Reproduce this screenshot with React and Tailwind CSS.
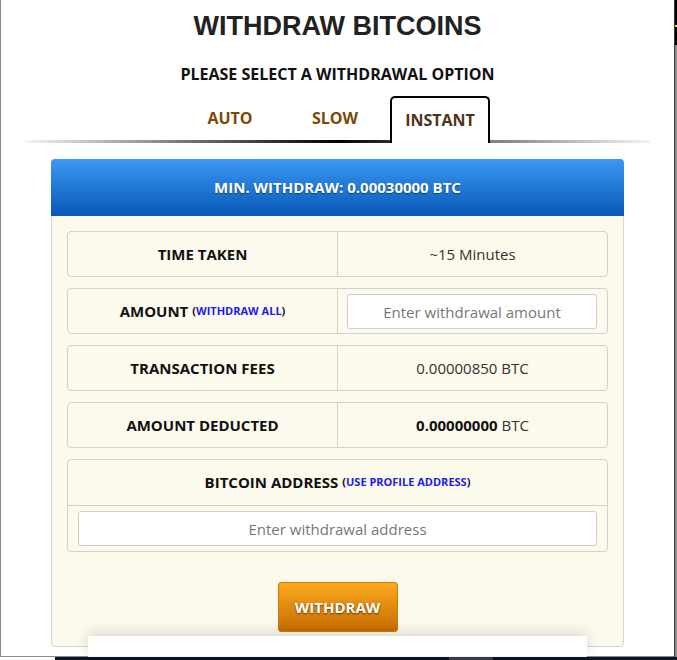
import React from 'react';

const rows = [
  { label: 'TIME TAKEN', value: '~15 Minutes' },
  { label: 'AMOUNT', link: 'WITHDRAW ALL', input: 'Enter withdrawal amount' },
  { label: 'TRANSACTION FEES', value: '0.00000850 BTC' },
  { label: 'AMOUNT DEDUCTED', bold: '0.00000000', value: ' BTC' },
];

function Row({ row }) {
  return (
    <div className="flex h-[46px] rounded-[4px] border border-[#d2d2ca] bg-[#fcfaed]">
      <div className="w-[270px] flex items-center justify-center border-r border-[#d2d2ca] text-[15px] font-bold text-[#111]">
        {row.label}
        {row.link && (
          <span className="ml-[4px] text-[11px] font-bold text-[#111]">
            (<span className="text-[#1b1bf2]">{row.link}</span>)
          </span>
        )}
      </div>
      <div className="flex-1 flex items-center justify-center text-[15px] text-[#333]">
        {row.input ? (
          <div className="w-full h-full pl-[9px] pr-[10px] pt-[5px] pb-[4px]">
            <input
              placeholder={row.input}
              className="w-full h-full rounded-[3px] border border-[#cccccc] bg-white text-center text-[15px] placeholder:text-[#777] outline-none"
            />
          </div>
        ) : (
          <span>
            {row.bold && <b className="text-[#111]">{row.bold}</b>}
            {row.value}
          </span>
        )}
      </div>
    </div>
  );
}

export default function App() {
  return (
    <div className="relative w-[677px] h-[660px] overflow-hidden bg-white flex flex-col font-['Open_Sans',sans-serif]">
      <div className="flex h-[657px]">
        <div className="flex-1 flex flex-col border-l border-b border-[#8a8a8a]">
          {/* Title */}
          <h1 className="pt-[13px] text-center text-[27px] leading-none font-bold text-[#222] font-['Liberation_Sans',Arial,sans-serif]">
            WITHDRAW BITCOINS
          </h1>
          <p className="mt-[24px] text-center text-[16px] leading-[20px] font-bold text-[#111]">
            PLEASE SELECT A WITHDRAWAL OPTION
          </p>

          {/* Tabs */}
          <div className="mt-[12px] flex flex-col">
            <div className="flex justify-center items-end gap-[5px] pr-[5px]">
              <div className="w-[100px] h-[44px] pt-[12px] text-center text-[16px] leading-[20px] font-bold text-[#7a4a06]">AUTO</div>
              <div className="w-[100px] h-[44px] pt-[12px] text-center text-[16px] leading-[20px] font-bold text-[#7a4a06]">SLOW</div>
              <div className="relative z-10 w-[100px] h-[47px] -mb-[3px] pt-[10px] rounded-t-[5px] border-2 border-b-0 border-black bg-white text-center text-[16px] leading-[20px] font-bold text-[#4e3417]">
                <span className="inline-block pt-[2px]">INSTANT</span>
              </div>
            </div>
            <div className="h-[3px] mx-[24px] bg-[linear-gradient(to_right,#f4f4f4,#000_50%,#6a6a6a_70%,#f4f4f4)]" />
          </div>

          {/* Card */}
          <div className="mt-[16px] mx-[50px] rounded-[4px] border border-[#d6d6cc] bg-[#fcfaed] flex flex-col">
            <div className="-m-px h-[57px] rounded-t-[4px] bg-[linear-gradient(to_bottom,#3b98f3,#0758b7)] flex items-center justify-center text-[15px] font-bold text-white [text-shadow:0_1px_1px_rgba(0,0,0,0.45)]">
              MIN. WITHDRAW: 0.00030000 BTC
            </div>
            <div className="px-[15px] pt-[16px] pb-[14px] flex flex-col gap-[11px]">
              {rows.map((r) => (
                <Row key={r.label} row={r} />
              ))}
              <div className="rounded-[4px] border border-[#d2d2ca] bg-[#fcfaed] flex flex-col">
                <div className="h-[46px] flex items-center justify-center border-b border-[#d2d2ca] text-[15px] font-bold text-[#111]">
                  BITCOIN ADDRESS
                  <span className="ml-[4px] text-[11px] font-bold text-[#111]">
                    (<span className="text-[#1b1bf2]">USE PROFILE ADDRESS</span>)
                  </span>
                </div>
                <div className="px-[10px] pt-[5px] pb-[5px]">
                  <input
                    placeholder="Enter withdrawal address"
                    className="w-full h-[35px] rounded-[3px] border border-[#cccccc] bg-white text-center text-[15px] placeholder:text-[#777] outline-none"
                  />
                </div>
              </div>
              <div className="mt-[19px] flex justify-center">
                <button className="w-[120px] h-[50px] rounded-[3px] border border-[#cf7a05] bg-[linear-gradient(to_bottom,#fca91f,#c66c02)] text-[15px] font-bold text-white [text-shadow:0_1px_2px_rgba(0,0,0,0.6)]">
                  WITHDRAW
                </button>
              </div>
            </div>
          </div>
        </div>

        {/* Right edge strip */}
        <div className="w-[3px] flex flex-col border-l border-[#3c3c3c]">
          <div className="h-[45px] bg-black flex flex-col">
            <div className="h-[25px]" />
            <div className="h-[2px] bg-[#e8e800]" />
          </div>
          <div className="flex-1 bg-[#8a8a8a]" />
        </div>
      </div>

      {/* Bottom strip */}
      <div className="flex h-[3px]">
        <div className="w-[55px] bg-white" />
        <div className="w-[394px] bg-[#0e1521]" />
        <div className="w-[44px] bg-[#3a3e46]" />
        <div className="flex-1 bg-[#0e1521]" />
      </div>

      {/* Floating panel over the card */}
      <div className="absolute left-[88px] top-[636px] w-[499px] h-[21px] bg-white border-b border-[#f3f3f3] shadow-[0_-3px_14px_rgba(0,0,0,0.14)]" />
    </div>
  );
}
